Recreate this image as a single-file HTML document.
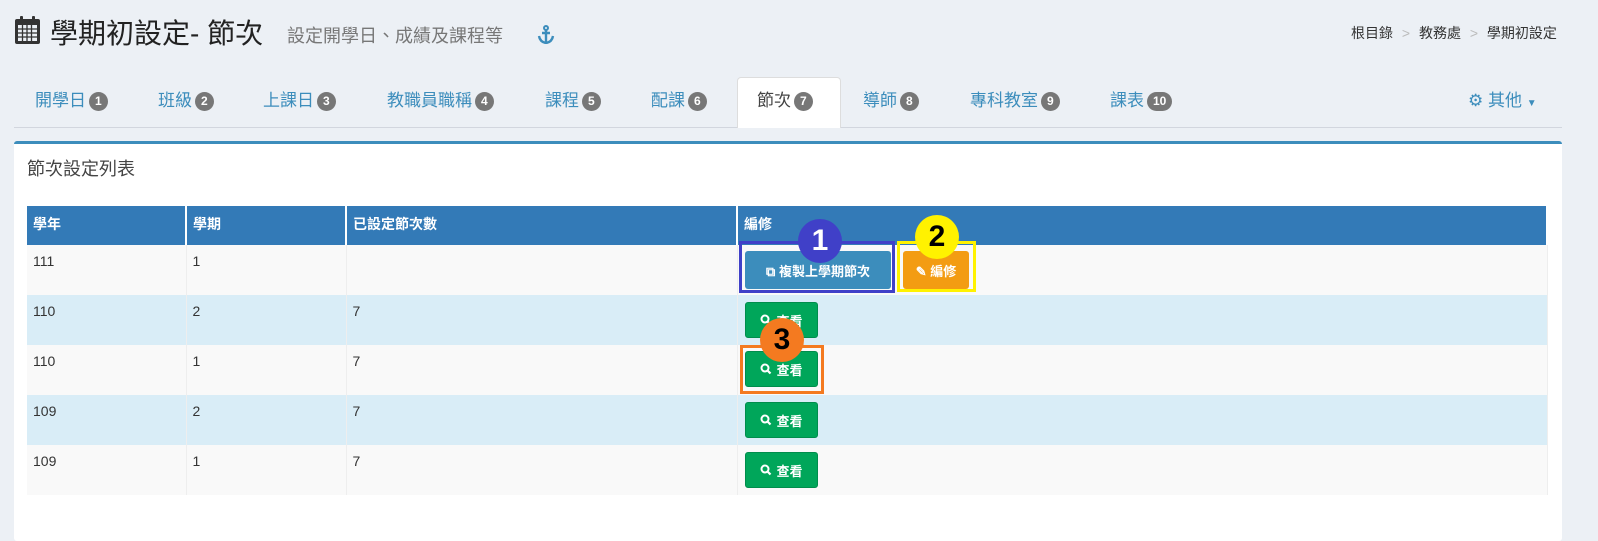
<!DOCTYPE html>
<html><head><meta charset="utf-8"><style>
*{box-sizing:border-box;margin:0;padding:0}
body{width:1598px;height:528px;background:#ecf0f5;font-family:"Liberation Sans","Noto Sans CJK TC",sans-serif;position:relative;overflow:hidden;color:#333}
.abs{position:absolute}
.title{left:50px;top:12px;font-size:28px;color:#222;white-space:nowrap}
.sub{left:287px;top:22px;font-size:18px;color:#777;white-space:nowrap}
.bc{top:23px;font-size:14px;color:#333;white-space:nowrap}
.tab{top:90px;font-size:17px;color:#3c8dbc;white-space:nowrap;line-height:22px}
.badge{display:inline-block;background:#777;color:#fff;font-size:12px;font-weight:bold;border-radius:10px;padding:0 6px;line-height:19px;vertical-align:1px;margin-left:3px}
.line{left:14px;top:127px;width:1548px;height:1px;background:#d2d6de}
.act{left:737px;top:77px;width:104px;height:51px;background:#fff;border:1px solid #ddd;border-bottom:none;border-radius:4px 4px 0 0}
.panel{left:14px;top:141px;width:1548px;height:400px;background:#fff;border-top:3px solid #3c8dbc;border-radius:3px}
table{position:absolute;left:27px;top:206px;border-collapse:collapse;width:1521px;font-size:14px}
th{background:#337ab7;color:#fff;text-align:left;height:39px;padding:0 6px;border-right:2px solid #fff;font-weight:bold;vertical-align:top;padding-top:8px}
td{height:50px;padding:8px 6px;vertical-align:top;border-right:1px solid #eee}
tr.o td{background:#f9f9f9}tr.e td{background:#d9edf7}
.btn{position:absolute;color:#fff;font-size:13px;font-weight:bold;border-radius:3px;display:flex;align-items:center;justify-content:center;gap:4px}
.g{background:#00a65a;border:1px solid #008d4c;width:73px;height:36px}
.circ{position:absolute;border-radius:50%;font-weight:bold;font-size:30px;display:flex;align-items:center;justify-content:center;font-family:"Liberation Sans",sans-serif}
</style></head><body>
<svg class="abs" style="left:14px;top:15px" width="27" height="30" viewBox="0 0 27 30"><rect x="1" y="4" width="25" height="25" rx="2" fill="#333"/><rect x="4" y="10" width="19" height="16" fill="#ecf0f5"/><path d="M4 14h19M4 18h19M4 22h19M8.5 10v16M13 10v16M17.5 10v16" stroke="#333" stroke-width="1.3"/><rect x="6" y="1" width="3" height="7" rx="1" fill="#333"/><rect x="18" y="1" width="3" height="7" rx="1" fill="#333"/></svg>
<div class="abs title">學期初設定- 節次</div>
<div class="abs sub">設定開學日、成績及課程等</div>
<svg class="abs" style="left:537px;top:25px" width="18" height="19" viewBox="0 0 18 19"><circle cx="9" cy="3" r="2" fill="none" stroke="#3c8dbc" stroke-width="2"/><path d="M9 5v13M5 8h8M2 11q1 6 7 7q6-1 7-7" fill="none" stroke="#3c8dbc" stroke-width="2.4"/></svg>
<div class="abs bc" style="left:1351px">根目錄 <span style="color:#bbb;margin:0 5px">&gt;</span> 教務處 <span style="color:#bbb;margin:0 5px">&gt;</span> 學期初設定</div>
<div class="abs line"></div>
<div class="abs act"></div>
<div class="abs tab" style="left:35px">開學日<span class="badge">1</span></div>
<div class="abs tab" style="left:158px">班級<span class="badge">2</span></div>
<div class="abs tab" style="left:263px">上課日<span class="badge">3</span></div>
<div class="abs tab" style="left:387px">教職員職稱<span class="badge">4</span></div>
<div class="abs tab" style="left:545px">課程<span class="badge">5</span></div>
<div class="abs tab" style="left:651px">配課<span class="badge">6</span></div>
<div class="abs tab" style="left:757px;color:#444">節次<span class="badge">7</span></div>
<div class="abs tab" style="left:863px">導師<span class="badge">8</span></div>
<div class="abs tab" style="left:970px">專科教室<span class="badge">9</span></div>
<div class="abs tab" style="left:1110px">課表<span class="badge">10</span></div>
<div class="abs tab" style="left:1468px">⚙ 其他 <span style="font-size:10px">▼</span></div>
<div class="abs panel"></div>
<div class="abs" style="left:27px;top:155px;font-size:18px;color:#444">節次設定列表</div>
<table>
<tr><th style="width:159px">學年</th><th style="width:160px">學期</th><th style="width:391px">已設定節次數</th><th>編修</th></tr>
<tr class="o"><td>111</td><td>1</td><td></td><td></td></tr>
<tr class="e"><td>110</td><td>2</td><td>7</td><td></td></tr>
<tr class="o"><td>110</td><td>1</td><td>7</td><td></td></tr>
<tr class="e"><td>109</td><td>2</td><td>7</td><td></td></tr>
<tr class="o"><td>109</td><td>1</td><td>7</td><td></td></tr>
</table>
<div class="abs" style="left:739px;top:241px;width:156px;height:52px;border:3px solid #4040c8"></div>
<div class="btn" style="left:745px;top:251px;width:146px;height:38px;background:#3c8dbc">⧉ 複製上學期節次</div>
<div class="abs" style="left:897px;top:241px;width:79px;height:51px;border:3px solid #fff200"></div>
<div class="btn" style="left:903px;top:251px;width:66px;height:38px;background:#f39c12">✎ 編修</div>
<div class="abs" style="left:740px;top:345px;width:84px;height:49px;border:3px solid #f47a20"></div>
<div class="btn g" style="left:745px;top:302px"><svg width="12" height="12" viewBox="0 0 12 12"><circle cx="5" cy="5" r="3.5" fill="none" stroke="#fff" stroke-width="2"/><path d="M7.5 7.5l3 3" stroke="#fff" stroke-width="2.2"/></svg>查看</div>
<div class="btn g" style="left:745px;top:351px"><svg width="12" height="12" viewBox="0 0 12 12"><circle cx="5" cy="5" r="3.5" fill="none" stroke="#fff" stroke-width="2"/><path d="M7.5 7.5l3 3" stroke="#fff" stroke-width="2.2"/></svg>查看</div>
<div class="btn g" style="left:745px;top:402px"><svg width="12" height="12" viewBox="0 0 12 12"><circle cx="5" cy="5" r="3.5" fill="none" stroke="#fff" stroke-width="2"/><path d="M7.5 7.5l3 3" stroke="#fff" stroke-width="2.2"/></svg>查看</div>
<div class="btn g" style="left:745px;top:452px"><svg width="12" height="12" viewBox="0 0 12 12"><circle cx="5" cy="5" r="3.5" fill="none" stroke="#fff" stroke-width="2"/><path d="M7.5 7.5l3 3" stroke="#fff" stroke-width="2.2"/></svg>查看</div>
<div class="circ" style="left:798px;top:219px;width:44px;height:44px;background:#4040c8;color:#fff">1</div>
<div class="circ" style="left:915px;top:215px;width:44px;height:44px;background:#fff200;color:#000">2</div>
<div class="circ" style="left:760px;top:318px;width:44px;height:44px;background:#f47a20;color:#000">3</div>
</body></html>
